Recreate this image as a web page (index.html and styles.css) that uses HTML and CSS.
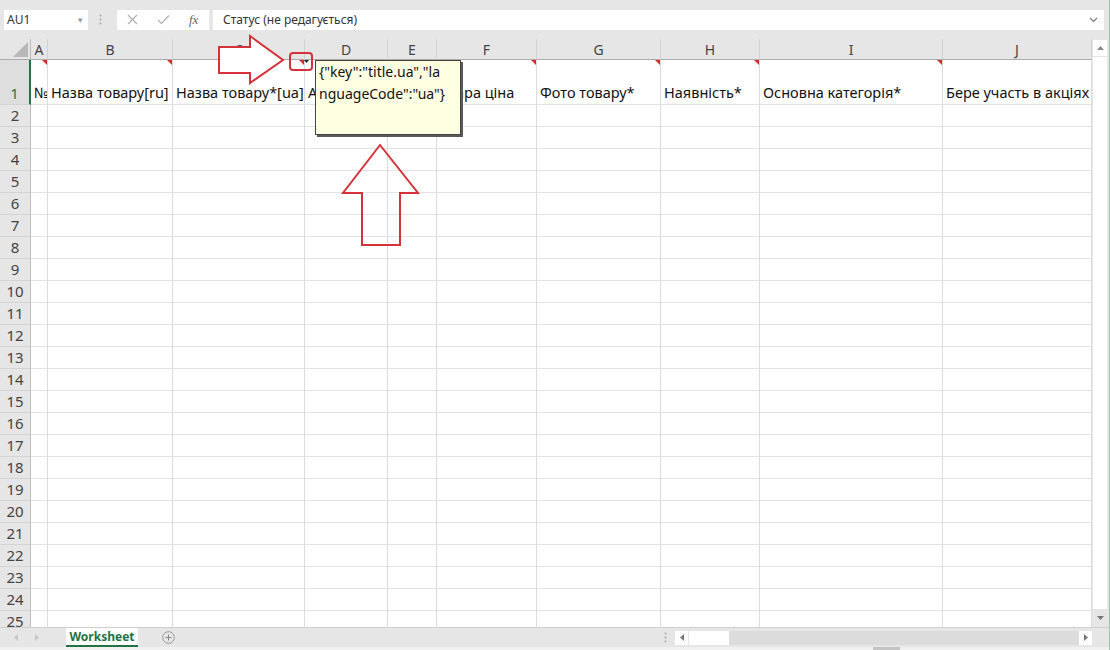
FILE: index.html
```html
<!DOCTYPE html>
<html lang="uk">
<head>
    <meta charset="UTF-8">
    <meta name="viewport" content="width=device-width, initial-scale=1.0">
    <title>Worksheet</title>
    <link rel="stylesheet" href="styles.css">
</head>
<body>
<div class="app">
    <div class="formula-bar">
        <div class="name-box">
            <span>AU1</span>
            <span class="caret">&#9662;</span>
        </div>
        <div class="grip">
            <svg width="3" height="11" viewBox="0 0 3 11"><circle cx="1.5" cy="1.5" r="1" fill="#aaa"/><circle cx="1.5" cy="5.5" r="1" fill="#aaa"/><circle cx="1.5" cy="9.5" r="1" fill="#aaa"/></svg>
        </div>
        <div class="fx-buttons">
            <span class="fx-btn">
                <svg width="11" height="11" viewBox="0 0 11 11"><path d="M1 1 L10 10 M10 1 L1 10" stroke="#b0b0b0" stroke-width="1.1" fill="none"/></svg>
            </span>
            <span class="fx-btn">
                <svg width="13" height="11" viewBox="0 0 13 11"><path d="M1 6 L4.5 9.5 L12 1.5" stroke="#b0b0b0" stroke-width="1.1" fill="none"/></svg>
            </span>
            <span class="fx-btn fx">fx</span>
        </div>
        <div class="formula-input">
            <span>Статус (не редагується)</span>
            <svg width="9" height="6" viewBox="0 0 9 6"><path d="M1 1 L4.5 4.5 L8 1" stroke="#777" stroke-width="1.2" fill="none"/></svg>
        </div>
    </div>

    <div class="sheet-area">
        <div class="grid-wrap">
            <div class="row col-heads">
                <div class="corner">
                    <svg width="15" height="15" viewBox="0 0 15 15"><path d="M15 0 L15 15 L0 15 Z" fill="#b8b8b8"/></svg>
                </div>
                <div>A</div><div>B</div><div>C</div><div>D</div><div>E</div>
                <div>F</div><div>G</div><div>H</div><div>I</div><div>J</div>
            </div>
            <div class="row row-tall">
                <div class="rh active">1</div>
                <div class="cell note">№</div>
                <div class="cell note">Назва товару[ru]</div>
                <div class="cell note">Назва товару*[ua]</div>
                <div class="cell note">Артикул*</div>
                <div class="cell note"></div>
                <div class="cell note">Стара ціна</div>
                <div class="cell note">Фото товару*</div>
                <div class="cell note">Наявність*</div>
                <div class="cell note">Основна категорія*</div>
                <div class="cell">Бере участь в акціях</div>
            </div>
            <div class="row"><div class="rh">2</div><div></div><div></div><div></div><div></div><div></div><div></div><div></div><div></div><div></div><div></div></div>
            <div class="row"><div class="rh">3</div><div></div><div></div><div></div><div></div><div></div><div></div><div></div><div></div><div></div><div></div></div>
            <div class="row"><div class="rh">4</div><div></div><div></div><div></div><div></div><div></div><div></div><div></div><div></div><div></div><div></div></div>
            <div class="row"><div class="rh">5</div><div></div><div></div><div></div><div></div><div></div><div></div><div></div><div></div><div></div><div></div></div>
            <div class="row"><div class="rh">6</div><div></div><div></div><div></div><div></div><div></div><div></div><div></div><div></div><div></div><div></div></div>
            <div class="row"><div class="rh">7</div><div></div><div></div><div></div><div></div><div></div><div></div><div></div><div></div><div></div><div></div></div>
            <div class="row"><div class="rh">8</div><div></div><div></div><div></div><div></div><div></div><div></div><div></div><div></div><div></div><div></div></div>
            <div class="row"><div class="rh">9</div><div></div><div></div><div></div><div></div><div></div><div></div><div></div><div></div><div></div><div></div></div>
            <div class="row"><div class="rh">10</div><div></div><div></div><div></div><div></div><div></div><div></div><div></div><div></div><div></div><div></div></div>
            <div class="row"><div class="rh">11</div><div></div><div></div><div></div><div></div><div></div><div></div><div></div><div></div><div></div><div></div></div>
            <div class="row"><div class="rh">12</div><div></div><div></div><div></div><div></div><div></div><div></div><div></div><div></div><div></div><div></div></div>
            <div class="row"><div class="rh">13</div><div></div><div></div><div></div><div></div><div></div><div></div><div></div><div></div><div></div><div></div></div>
            <div class="row"><div class="rh">14</div><div></div><div></div><div></div><div></div><div></div><div></div><div></div><div></div><div></div><div></div></div>
            <div class="row"><div class="rh">15</div><div></div><div></div><div></div><div></div><div></div><div></div><div></div><div></div><div></div><div></div></div>
            <div class="row"><div class="rh">16</div><div></div><div></div><div></div><div></div><div></div><div></div><div></div><div></div><div></div><div></div></div>
            <div class="row"><div class="rh">17</div><div></div><div></div><div></div><div></div><div></div><div></div><div></div><div></div><div></div><div></div></div>
            <div class="row"><div class="rh">18</div><div></div><div></div><div></div><div></div><div></div><div></div><div></div><div></div><div></div><div></div></div>
            <div class="row"><div class="rh">19</div><div></div><div></div><div></div><div></div><div></div><div></div><div></div><div></div><div></div><div></div></div>
            <div class="row"><div class="rh">20</div><div></div><div></div><div></div><div></div><div></div><div></div><div></div><div></div><div></div><div></div></div>
            <div class="row"><div class="rh">21</div><div></div><div></div><div></div><div></div><div></div><div></div><div></div><div></div><div></div><div></div></div>
            <div class="row"><div class="rh">22</div><div></div><div></div><div></div><div></div><div></div><div></div><div></div><div></div><div></div><div></div></div>
            <div class="row"><div class="rh">23</div><div></div><div></div><div></div><div></div><div></div><div></div><div></div><div></div><div></div><div></div></div>
            <div class="row"><div class="rh">24</div><div></div><div></div><div></div><div></div><div></div><div></div><div></div><div></div><div></div><div></div></div>
            <div class="row"><div class="rh">25</div><div></div><div></div><div></div><div></div><div></div><div></div><div></div><div></div><div></div><div></div></div>
        </div>

        <div class="vscroll">
            <div class="vbtn">
                <svg width="7" height="4" viewBox="0 0 7 4"><path d="M0 4 L3.5 0 L7 4 Z" fill="#888"/></svg>
            </div>
            <div class="vthumb"></div>
            <div class="vbtn down">
                <svg width="7" height="4" viewBox="0 0 7 4"><path d="M0 0 L7 0 L3.5 4 Z" fill="#777"/></svg>
            </div>
        </div>
    </div>

    <div class="tab-bar">
        <div class="tab-nav">
            <svg width="4" height="7" viewBox="0 0 4 7"><path d="M4 0 L0 3.5 L4 7 Z" fill="#c8c8c8"/></svg>
            <svg width="4" height="7" viewBox="0 0 4 7"><path d="M0 0 L4 3.5 L0 7 Z" fill="#c8c8c8"/></svg>
        </div>
        <div class="tab active">Worksheet</div>
        <div class="tab-add">
            <svg width="13" height="13" viewBox="0 0 13 13"><circle cx="6.5" cy="6.5" r="5.8" fill="none" stroke="#999" stroke-width="1"/><path d="M6.5 3.5 V9.5 M3.5 6.5 H9.5" stroke="#888" stroke-width="1"/></svg>
        </div>
        <div class="tab-spacer"></div>
        <div class="hscroll">
            <div class="hgrip">
                <svg width="3" height="11" viewBox="0 0 3 11"><circle cx="1.5" cy="1.5" r="1" fill="#aaa"/><circle cx="1.5" cy="5.5" r="1" fill="#aaa"/><circle cx="1.5" cy="9.5" r="1" fill="#aaa"/></svg>
            </div>
            <div class="hbtn">
                <svg width="4" height="7" viewBox="0 0 4 7"><path d="M4 0 L0 3.5 L4 7 Z" fill="#777"/></svg>
            </div>
            <div class="hthumb"></div>
            <div class="htrack"></div>
            <div class="hbtn">
                <svg width="4" height="7" viewBox="0 0 4 7"><path d="M0 0 L4 3.5 L0 7 Z" fill="#777"/></svg>
            </div>
        </div>
    </div>
    <div class="status-strip"><span class="status-knob"></span></div>

    <!-- cell comment popup -->
    <div class="comment">{"key":"title.ua","la
nguageCode":"ua"}</div>

    <!-- red hand-drawn marks on top of the sheet -->
    <svg class="marks" width="1110" height="650" viewBox="0 0 1110 650">
        <path d="M304 60 L309 60 L306.5 63 Z" fill="#222"/>
        <polygon points="219,47 250,47 250,36 283,60 250,83 250,73 219,73" fill="#fff" stroke="#d6323a" stroke-width="2" stroke-linejoin="miter"/>
        <rect x="290" y="53" width="22" height="17" rx="3" fill="none" stroke="#d6323a" stroke-width="2"/>
        <polygon points="380,145 418,193 400,193 400,245 362,245 362,193 343,193" fill="none" stroke="#d6323a" stroke-width="2"/>
    </svg>
</div>
</body>
</html>
```

FILE: styles.css
```css
* {
    box-sizing: border-box;
}

body {
    margin: 0;
    width: 1110px;
    height: 650px;
    overflow: hidden;
    background-color: #e6e6e6;
    font-family: "Noto Sans", "Open Sans", Arial, sans-serif;
    color: #222;
}

.app {
    position: relative;
    width: 1110px;
    height: 650px;
    border-right: 1px solid #9cc4a8;
}

/* formula bar */

.formula-bar {
    display: flex;
    align-items: center;
    height: 39px;
    padding: 0 5px 0 4px;
}

.name-box {
    width: 84px;
    height: 20px;
    background-color: #fff;
    display: flex;
    align-items: center;
    justify-content: space-between;
    padding: 0 5px 0 3px;
    font-size: 12px;
    color: #333;
}

.name-box .caret {
    font-size: 9px;
    color: #999;
}

.grip {
    width: 29px;
    display: flex;
    justify-content: center;
    padding-right: 4px;
}

.fx-buttons {
    width: 92px;
    height: 20px;
    background-color: #fff;
    display: flex;
    align-items: center;
}

.fx-btn {
    width: 31px;
    display: flex;
    justify-content: center;
    align-items: center;
}

.fx {
    font-family: "Liberation Serif", serif;
    font-style: italic;
    font-size: 13px;
    color: #666;
}

.formula-input {
    flex: 1;
    height: 20px;
    margin-left: 4px;
    background-color: #fff;
    display: flex;
    align-items: center;
    justify-content: space-between;
    padding: 0 6px 0 10px;
    font-size: 12px;
    color: #333;
}

/* sheet */

.sheet-area {
    display: flex;
    height: 588px;
}

.grid-wrap {
    width: 1092px;
    background-color: #fff;
    overflow: hidden;
}

.row {
    display: grid;
    grid-template-columns: 31px 17px 125px 132px 83px 49px 100px 124px 99px 183px 1fr;
    height: 22px;
}

.row > div {
    border-right: 1px solid #dcdcdc;
    border-bottom: 1px solid #e3e3e3;
}

.col-heads {
    height: 21px;
}

.col-heads > div {
    background-color: #e6e6e6;
    border-right: 1px solid #d2d2d2;
    border-bottom: 1px solid #ababab;
    display: flex;
    align-items: center;
    justify-content: center;
    font-size: 14px;
    color: #444;
}

.col-heads .corner {
    justify-content: flex-end;
    align-items: flex-end;
    padding: 0 2px 2px 0;
    border-right-color: #bcbcbc;
}

.rh {
    background-color: #e6e6e6;
    display: flex;
    align-items: flex-end;
    justify-content: center;
    padding-bottom: 1px;
    font-size: 15px;
    line-height: 20px;
    color: #444;
}

.row > .rh {
    border-right: 1px solid #bcbcbc;
    border-bottom: 1px solid #d4d4d4;
}

.row > .rh.active {
    color: #217346;
    background-color: #dedede;
    border-right: 2px solid #217346;
}

.row-tall {
    height: 45px;
}

.cell {
    position: relative;
    display: flex;
    align-items: flex-end;
    padding: 0 2px 2px 3px;
    font-size: 14.5px;
    line-height: 19px;
    color: #111;
    white-space: nowrap;
    overflow: hidden;
}

.note::after {
    content: "";
    position: absolute;
    top: 0;
    right: 0;
    border-left: 5px solid transparent;
    border-top: 5px solid #e0262b;
}

/* vertical scrollbar */

.vscroll {
    width: 17px;
    display: flex;
    flex-direction: column;
    padding: 1px 2px 0 1px;
    background-color: #e6e6e6;
}

.vbtn {
    height: 16px;
    background-color: #fff;
    display: flex;
    align-items: center;
    justify-content: center;
}

.vbtn.down {
    background-color: transparent;
    height: 18px;
}

.vthumb {
    flex: 1;
    margin: 1px 0 0;
    background-color: #fff;
}

/* sheet tabs + horizontal scrollbar */

.tab-bar {
    display: flex;
    height: 20px;
    background-color: #e6e6e6;
    border-top: 1px solid #cfcfcf;
}

.tab-nav {
    width: 66px;
    display: flex;
    align-items: center;
    gap: 17px;
    padding-left: 14px;
}

.tab {
    width: 72px;
    display: flex;
    align-items: center;
    justify-content: center;
    font-size: 12px;
    font-weight: bold;
}

.tab.active {
    background-color: #fff;
    color: #217346;
    border-bottom: 2px solid #217346;
}

.tab-add {
    width: 60px;
    display: flex;
    align-items: center;
    justify-content: center;
}

.tab-spacer {
    flex: 1;
}

.hscroll {
    width: 454px;
    display: flex;
    align-items: center;
    padding-right: 17px;
}

.hgrip {
    width: 20px;
    display: flex;
    justify-content: center;
}

.hbtn {
    width: 13px;
    height: 14px;
    background-color: #fff;
    display: flex;
    align-items: center;
    justify-content: center;
}

.hthumb {
    width: 41px;
    height: 14px;
    background-color: #fff;
    border-left: 1px solid #e6e6e6;
}

.htrack {
    flex: 1;
    height: 14px;
    background-color: #dcdcdc;
}

.status-strip {
    position: relative;
    height: 3px;
    background-color: #f0f0f0;
}

.status-knob {
    position: absolute;
    left: 873px;
    top: 0;
    width: 27px;
    height: 3px;
    background-color: #c4c4c4;
}

/* overlays */

.comment {
    position: absolute;
    left: 315px;
    top: 60px;
    width: 146px;
    height: 75px;
    background-color: #ffffe1;
    border: 1px solid #444;
    box-shadow: 2px 2px 0 #5a5a5a;
    padding: 0 0 0 3px;
    font-size: 14px;
    line-height: 22px;
    color: #111;
    white-space: pre;
}

.marks {
    position: absolute;
    left: 0;
    top: 0;
    pointer-events: none;
}
```
